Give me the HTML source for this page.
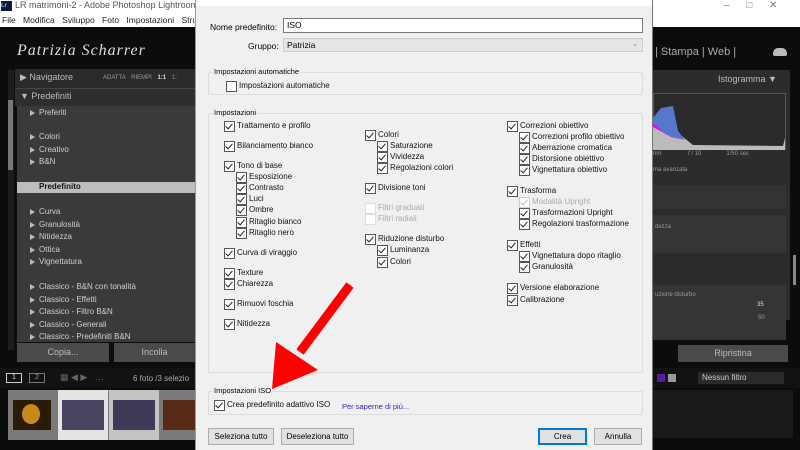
<!DOCTYPE html>
<html><head><meta charset="utf-8"><style>
*{margin:0;padding:0;box-sizing:border-box}
body{width:800px;height:450px;overflow:hidden;background:#0c0c0c;position:relative;font-family:"Liberation Sans",sans-serif}
.a{position:absolute;white-space:nowrap}
.li{position:absolute;left:30px;font-size:8px;color:#cfcfcf;white-space:nowrap;line-height:10px}
.li:before{content:"";display:inline-block;vertical-align:middle;border-left:5px solid #bbb;border-top:3px solid transparent;border-bottom:3px solid transparent;margin-right:4px}
.dlg{position:absolute;left:195px;top:0;width:458px;height:450px;background:#f0f0f0;border-left:1px solid #999;border-right:1px solid #777}
.dlg .a{font-size:8px;color:#000}
.c{position:absolute;font-size:8px;color:#111;white-space:nowrap;padding-left:13px;line-height:10px}
.c:before{content:"";position:absolute;left:0;top:0;width:9px;height:9px;border:1px solid #555;background:#fff}
.c:after{content:"";position:absolute;left:3px;top:1px;width:3px;height:6px;border-right:1px solid #222;border-bottom:1px solid #222;transform:rotate(40deg)}
.c.d{color:#aaa}.c.d:before{border-color:#ccc}.c.d:after{border-color:#bbb}
.c.u:after{display:none}.c.n:after{display:none}.c.n{color:#aaa}.c.n:before{border-color:#ddd}
.grp{position:absolute;border:1px solid #dcdcdc;border-radius:2px}
.btn{position:absolute;height:17px;background:#e1e1e1;border:1px solid #adadad;font-size:8px;text-align:center;line-height:15px;color:#000}
</style></head><body>
<div class="a" style="left:0;top:0;width:800px;height:27px;background:#fff"></div>
<div class="a" style="left:1px;top:1px;width:11px;height:10px;background:#0a1a3a;color:#6cf;font-size:6px;font-weight:bold;line-height:10px">Lr</div>
<div class="a" style="left:15px;top:0px;font-size:9px;color:#555">LR matrimoni-2 - Adobe Photoshop Lightroom Classic</div>
<div class="a" style="left:2px;top:15px;font-size:8.5px;color:#222;word-spacing:5px">File Modifica Sviluppo Foto Impostazioni Strume</div>
<div class="a" style="left:724px;top:0px;font-size:10px;color:#777">–&nbsp;&nbsp;&nbsp;&nbsp;&nbsp;&nbsp;□&nbsp;&nbsp;&nbsp;&nbsp;&nbsp;&nbsp;✕</div>
<div class="a" style="left:17px;top:42px;font-family:'Liberation Serif',serif;font-style:italic;font-size:16px;color:#ddd;letter-spacing:1px">Patrizia Scharrer</div>
<div class="a" style="left:8px;top:70px;width:6px;height:280px;background:#1d1d1d"></div>
<div class="a" style="left:8px;top:100px;width:5px;height:70px;background:#777"></div>
<div class="a" style="left:15px;top:69px;width:180px;height:19px;background:#2a2a2a"></div>
<div class="a" style="left:20px;top:72px;font-size:9px;color:#bbb">▶ Navigatore</div>
<div class="a" style="left:103px;top:75px;font-size:6px;color:#999;word-spacing:4px">ADATTA RIEMPI <b style="color:#ddd">1:1</b> 1:</div>
<div class="a" style="left:15px;top:88px;width:180px;height:18px;background:#2e2e2e;border-top:1px solid #444"></div>
<div class="a" style="left:20px;top:91px;font-size:9px;color:#bbb">▼ Predefiniti</div>
<div class="a" style="left:17px;top:106px;width:178px;height:236px;background:#3a3a3a"></div>
<div class="a" style="left:17px;top:182px;width:178px;height:11px;background:#bdbdbd"></div>
<div class="li" style="top:108px">Preferiti</div>
<div class="li" style="top:132px">Colori</div>
<div class="li" style="top:145px">Creativo</div>
<div class="li" style="top:157px">B&amp;N</div>
<div class="li" style="top:182px;color:#111;font-weight:bold">Predefinito</div>
<div class="li" style="top:207px">Curva</div>
<div class="li" style="top:220px">Granulosità</div>
<div class="li" style="top:232px">Nitidezza</div>
<div class="li" style="top:245px">Ottica</div>
<div class="li" style="top:257px">Vignettatura</div>
<div class="li" style="top:282px">Classico - B&amp;N con tonalità</div>
<div class="li" style="top:295px">Classico - Effetti</div>
<div class="li" style="top:307px">Classico - Filtro B&amp;N</div>
<div class="li" style="top:320px">Classico - Generali</div>
<div class="li" style="top:332px">Classico - Predefiniti B&amp;N</div>
<div class="a" style="left:17px;top:343px;width:92px;height:19px;background:#4a4a4a;color:#bbb;font-size:9px;text-align:center;line-height:19px">Copia...</div>
<div class="a" style="left:114px;top:343px;width:81px;height:19px;background:#4a4a4a;color:#bbb;font-size:9px;text-align:center;line-height:19px">Incolla</div>
<div class="a" style="left:0;top:368px;width:800px;height:20px;background:#121212"></div>
<div class="a" style="left:6px;top:373px;width:16px;height:10px;border:1px solid #ccc;color:#ddd;font-size:7px;text-align:center;line-height:8px">1</div>
<div class="a" style="left:29px;top:373px;width:16px;height:10px;border:1px solid #777;color:#999;font-size:7px;text-align:center;line-height:8px">2</div>
<div class="a" style="left:60px;top:372px;font-size:9px;color:#666">▦ ◀ ▶ &nbsp; …</div>
<div class="a" style="left:133px;top:374px;font-size:8px;color:#aaa">6 foto /3 selezio</div>
<div class="a" style="left:8px;top:390px;width:187px;height:50px;background:#7a7a7a"></div>
<div class="a" style="left:58px;top:390px;width:50px;height:50px;background:#e4e4e4"></div>
<div class="a" style="left:109px;top:390px;width:50px;height:50px;background:#c4c4c4"></div>
<div class="a" style="left:13px;top:400px;width:38px;height:30px;background:#2a1a08"></div>
<div class="a" style="left:22px;top:404px;width:18px;height:20px;background:#c9891a;border-radius:50%"></div>
<div class="a" style="left:62px;top:400px;width:42px;height:30px;background:#4a4460"></div>
<div class="a" style="left:113px;top:400px;width:42px;height:30px;background:#3f3a58"></div>
<div class="a" style="left:163px;top:400px;width:32px;height:30px;background:#5a2a18"></div>
<div class="a" style="left:655px;top:46px;font-size:11px;color:#aaa">| Stampa | Web |</div>
<div class="a" style="left:773px;top:48px;width:14px;height:8px;background:#bbb;border-radius:5px 5px 2px 2px"></div>
<div class="a" style="left:653px;top:70px;width:137px;height:250px;background:#2c2c2c"></div>
<div class="a" style="left:718px;top:74px;font-size:9px;color:#bbb">Istogramma ▼</div>
<div class="a" style="left:653px;top:93px;width:133px;height:57px;background:#2a2a2a;border:1px solid #555"></div>
<svg class="a" style="left:653px;top:93px" width="133" height="57"><path d="M0 25 L10 22 L15 18 L20 28 L25 40 L40 52 L130 53 L132 45 L132 57 L0 57Z" fill="#bbb"/><path d="M0 25 L8 15 L20 13 L25 38 L32 47 L14 42 L0 30Z" fill="#5577cc"/><path d="M0 30 L14 42 L32 47 L18 44 L0 34Z" fill="#e0f"/></svg>
<div class="a" style="left:653px;top:151px;font-size:6px;color:#999">nm&nbsp;&nbsp;&nbsp;&nbsp;&nbsp;&nbsp;&nbsp;&nbsp;&nbsp;&nbsp;&nbsp;&nbsp;&nbsp;&nbsp;&nbsp;&nbsp;<i>f</i> / 10&nbsp;&nbsp;&nbsp;&nbsp;&nbsp;&nbsp;&nbsp;&nbsp;&nbsp;&nbsp;&nbsp;&nbsp;&nbsp;&nbsp;&nbsp;1/50 sec</div>
<div class="a" style="left:653px;top:167px;font-size:6px;color:#999">ma avanzata</div>
<div class="a" style="left:653px;top:185px;width:133px;height:24px;background:#333"></div>
<div class="a" style="left:653px;top:215px;width:133px;height:38px;background:#353535"></div>
<div class="a" style="left:655px;top:224px;font-size:6px;color:#999">dezza</div>
<div class="a" style="left:653px;top:285px;width:133px;height:55px;background:#353535"></div>
<div class="a" style="left:655px;top:292px;font-size:6px;color:#999">uzione disturbo</div>
<div class="a" style="left:757px;top:302px;font-size:6px;color:#ddd">35</div>
<div class="a" style="left:758px;top:315px;font-size:6px;color:#999">50</div>
<div class="a" style="left:793px;top:255px;width:3px;height:30px;background:#888"></div>
<div class="a" style="left:678px;top:345px;width:110px;height:17px;background:#4a4a4a;color:#bbb;font-size:9px;text-align:center;line-height:17px">Ripristina</div>
<div class="a" style="left:657px;top:374px;width:8px;height:8px;background:#5a1aa0"></div>
<div class="a" style="left:668px;top:374px;width:8px;height:8px;background:#999"></div>
<div class="a" style="left:698px;top:372px;width:86px;height:12px;background:#2a2a2a;color:#ccc;font-size:8px;line-height:12px;padding-left:4px">Nessun filtro</div>
<div class="a" style="left:653px;top:390px;width:140px;height:48px;background:#1a1a1a"></div>
<div class="dlg">
<div class="a" style="left:0;top:0;width:456px;height:6px;background:#fff"></div>
<div class="a" style="left:14px;top:22px;font-size:8.5px">Nome predefinito:</div>
<div class="a" style="left:87px;top:18px;width:360px;height:15px;background:#fff;border:1px solid #7a7a7a;font-size:8.5px;line-height:13px;padding-left:3px">ISO</div>
<div class="a" style="left:52px;top:41px;font-size:8.5px">Gruppo:</div>
<div class="a" style="left:87px;top:38px;width:360px;height:14px;background:#e5e5e5;border:1px solid #ccc;font-size:8.5px;line-height:12px;padding-left:3px">Patrizia<span style="position:absolute;right:4px;color:#777;font-size:7px">⌄</span></div>
<div class="grp" style="left:12px;top:72px;width:435px;height:23px"></div>
<div class="a" style="left:17px;top:67px;background:#f0f0f0;padding:0 1px;font-size:7.5px">Impostazioni automatiche</div>
<div class="c u" style="left:30px;top:81px">Impostazioni automatiche</div>
<div class="grp" style="left:12px;top:113px;width:435px;height:260px"></div>
<div class="a" style="left:17px;top:108px;background:#f0f0f0;padding:0 1px;font-size:7.5px">Impostazioni</div>
<div class="c" style="left:28px;top:121px">Trattamento e profilo</div>
<div class="c" style="left:28px;top:141px">Bilanciamento bianco</div>
<div class="c" style="left:28px;top:161px">Tono di base</div>
<div class="c" style="left:40px;top:172px">Esposizione</div>
<div class="c" style="left:40px;top:183px">Contrasto</div>
<div class="c" style="left:40px;top:194px">Luci</div>
<div class="c" style="left:40px;top:205px">Ombre</div>
<div class="c" style="left:40px;top:217px">Ritaglio bianco</div>
<div class="c" style="left:40px;top:228px">Ritaglio nero</div>
<div class="c" style="left:28px;top:248px">Curva di viraggio</div>
<div class="c" style="left:28px;top:268px">Texture</div>
<div class="c" style="left:28px;top:279px">Chiarezza</div>
<div class="c" style="left:28px;top:299px">Rimuovi foschia</div>
<div class="c" style="left:28px;top:319px">Nitidezza</div>
<div class="c" style="left:169px;top:130px">Colori</div>
<div class="c" style="left:181px;top:141px">Saturazione</div>
<div class="c" style="left:181px;top:152px">Vividezza</div>
<div class="c" style="left:181px;top:163px">Regolazioni colori</div>
<div class="c" style="left:169px;top:183px">Divisione toni</div>
<div class="c n" style="left:169px;top:203px">Filtri graduati</div>
<div class="c n" style="left:169px;top:214px">Filtri radiali</div>
<div class="c" style="left:169px;top:234px">Riduzione disturbo</div>
<div class="c" style="left:181px;top:245px">Luminanza</div>
<div class="c" style="left:181px;top:257px">Colori</div>
<div class="c" style="left:311px;top:121px">Correzioni obiettivo</div>
<div class="c" style="left:323px;top:132px">Correzioni profilo obiettivo</div>
<div class="c" style="left:323px;top:143px">Aberrazione cromatica</div>
<div class="c" style="left:323px;top:154px">Distorsione obiettivo</div>
<div class="c" style="left:323px;top:165px">Vignettatura obiettivo</div>
<div class="c" style="left:311px;top:186px">Trasforma</div>
<div class="c d" style="left:323px;top:197px">Modalità Upright</div>
<div class="c" style="left:323px;top:208px">Trasformazioni Upright</div>
<div class="c" style="left:323px;top:219px">Regolazioni trasformazione</div>
<div class="c" style="left:311px;top:240px">Effetti</div>
<div class="c" style="left:323px;top:251px">Vignettatura dopo ritaglio</div>
<div class="c" style="left:323px;top:262px">Granulosità</div>
<div class="c" style="left:311px;top:283px">Versione elaborazione</div>
<div class="c" style="left:311px;top:295px">Calibrazione</div>
<div class="grp" style="left:12px;top:391px;width:435px;height:24px"></div>
<div class="a" style="left:17px;top:386px;background:#f0f0f0;padding:0 1px;font-size:7.5px">Impostazioni ISO</div>
<div class="c" style="left:18px;top:400px">Crea predefinito adattivo ISO</div>
<div class="a" style="left:146px;top:402px;font-size:7.5px;color:#3a1ac0">Per saperne di più...</div>
<div class="btn" style="left:12px;top:428px;width:66px">Seleziona tutto</div>
<div class="btn" style="left:85px;top:428px;width:73px">Deseleziona tutto</div>
<div class="btn" style="left:342px;top:428px;width:49px;border:2px solid #0078d7;line-height:13px">Crea</div>
<div class="btn" style="left:398px;top:428px;width:48px">Annulla</div>
</div>
<svg class="a" style="left:0;top:0" width="800" height="450"><line x1="350" y1="285" x2="300" y2="352" stroke="#f00" stroke-width="9"/><polygon points="276,342 318,370 272,389" fill="#f00"/></svg>
</body></html>
